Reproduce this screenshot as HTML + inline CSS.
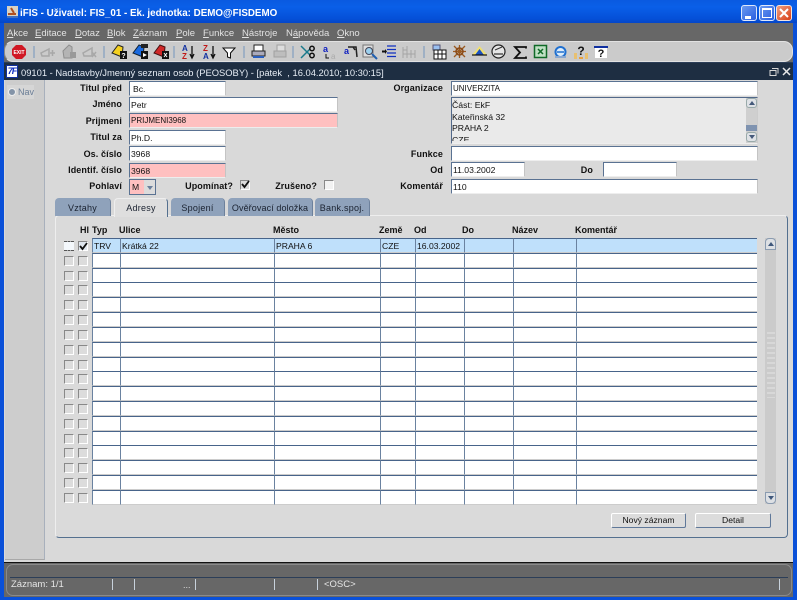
<!DOCTYPE html>
<html><head><meta charset="utf-8"><style>
html,body{margin:0;padding:0;width:797px;height:600px;overflow:hidden;background:#0a50d8}
*{box-sizing:border-box}
body{font-family:"Liberation Sans",sans-serif;font-size:9px;color:#111;position:relative}
.a,.l,.f,.r,.tab,.cb,.hd,.btn,.sep{position:absolute}
.l{font-weight:bold;text-align:right;font-size:9px;color:#111;height:12px;line-height:12px;letter-spacing:.1px}
.f{background:#fff;height:15px;line-height:14px;padding-left:1px;border-top:1px solid #5a7292;border-left:1px solid #5a7292;border-right:1px solid #c4c4c4;border-bottom:1px solid #eee;white-space:nowrap;overflow:hidden;font-size:8.600px}
.p{background:#ffc0c0}
.tab{top:198px;height:18px;background:#8fa2bb;border-radius:4px 4px 0 0;text-align:center;line-height:20px;font-size:9px;letter-spacing:.25px;border-right:1px solid #6d819c;color:#1a2230}
.hd{top:225px;font-weight:bold;font-size:9px;color:#111}
.cb{width:10px;height:10px;background:#ddd;border:1px solid #888;border-right-color:#fff;border-bottom-color:#fff}
.r{left:0;width:797px;height:15px}
.r i{position:absolute;top:0;height:15px;background:#fff;border-top:1px solid #48648a;border-left:1px solid #6a82a0;border-bottom:1px solid #ccc;font-style:normal;line-height:14px;padding-left:1px;font-size:8.600px;white-space:nowrap;overflow:hidden}
.r i:nth-of-type(1){left:92px;width:28px}
.r i:nth-of-type(2){left:120px;width:154px}
.r i:nth-of-type(3){left:274px;width:106px}
.r i:nth-of-type(4){left:380px;width:35px}
.r i:nth-of-type(5){left:415px;width:49px}
.r i:nth-of-type(6){left:464px;width:49px}
.r i:nth-of-type(7){left:513px;width:63px}
.r i:nth-of-type(8){left:576px;width:181px}
.r b{position:absolute;top:3px;width:10px;height:10px;background:#dcdcdc;border:1px solid #888;border-right-color:#fff;border-bottom-color:#fff}
.r b:nth-of-type(1){left:64px}
.r b:nth-of-type(2){left:78px}
.s i{background:#bfe0fb}
.btn{top:513px;height:15px;background:#dcdcdc;border:1px solid #5f7899;border-top-color:#fff;border-left-color:#fff;border-radius:2px;text-align:center;line-height:13px;font-size:8.600px}
.m{position:absolute;top:28px;font-size:9.500px;color:#e2e2e2;line-height:12px;text-decoration:none}
.sep{top:46px;width:2px;height:12px;background:#9fb0c4}
svg{position:absolute;overflow:visible}
.st{position:absolute;top:579px;width:1px;height:11px;background:#c8d2dc}
</style></head><body>
<div class="a" style="left:0;top:0;width:797px;height:23px;background:linear-gradient(#0a5ae0,#0a5fe8 30%,#0550d8 80%,#0446c8)"></div>
<svg style="left:5px;top:5px" width="15" height="15"><rect x="2" y="1" width="11" height="12" fill="#d8d2c4"/><path d="M3 12h9M3 9h8M6 3l3 5" stroke="#b05020" stroke-width="2"/><rect x="2" y="11" width="11" height="2" fill="#4070c0"/></svg>
<div class="a" style="left:20px;top:7px;color:#fff;font-size:9.800px;line-height:14px;font-weight:bold;white-space:nowrap">iFIS - Uživatel: FIS_01 - Ek. jednotka: DEMO@FISDEMO</div>
<div class="a" style="left:741px;top:5px;width:16px;height:16px;background:linear-gradient(135deg,#6a9af0,#2a5ee0);border:1px solid #dfe8fb;border-radius:3px"><div class="a" style="left:3px;top:10px;width:6px;height:3px;background:#fff"></div></div>
<div class="a" style="left:759px;top:5px;width:16px;height:16px;background:linear-gradient(135deg,#6a9af0,#2a5ee0);border:1px solid #dfe8fb;border-radius:3px"><div class="a" style="left:2px;top:2px;width:10px;height:10px;border:1px solid #fff;border-top-width:2px"></div></div>
<div class="a" style="left:776px;top:5px;width:16px;height:16px;background:linear-gradient(135deg,#f0a080,#d83c14);border:1px solid #f4e4de;border-radius:3px"><svg style="left:2px;top:2px" width="10" height="10"><path d="M1 1l8 8M9 1l-8 8" stroke="#fff" stroke-width="2"/></svg></div>

<div class="a" style="left:4px;top:23px;width:789px;height:39px;background:#676767"></div>
<span class="m" style="left:7px"><u>A</u>kce</span>
<span class="m" style="left:35px"><u>E</u>ditace</span>
<span class="m" style="left:75px"><u>D</u>otaz</span>
<span class="m" style="left:107px"><u>B</u>lok</span>
<span class="m" style="left:133px"><u>Z</u>áznam</span>
<span class="m" style="left:176px"><u>P</u>ole</span>
<span class="m" style="left:203px"><u>F</u>unkce</span>
<span class="m" style="left:242px"><u>N</u>ástroje</span>
<span class="m" style="left:286px">N<u>á</u>pověda</span>
<span class="m" style="left:337px"><u>O</u>kno</span>

<div class="a" style="left:4px;top:41px;width:789px;height:21px;background:#cbcbcb;border-radius:9px;border:1px solid #e2e2e2;border-left-color:#8a8a8a"></div>
<!-- toolbar icons -->
<svg style="left:11px;top:44px" width="16" height="16"><path d="M5 1h6l4 4v6l-4 4H5l-4-4V5z" fill="#d01824"/><text x="8" y="10" font-size="5" font-weight="bold" text-anchor="middle" fill="#fff" font-family="Liberation Sans">EXIT</text></svg>
<div class="sep" style="left:33px"></div>
<svg style="left:40px;top:45px" width="16" height="14"><path d="M1 8l8-4v7H2zM10 8h5M12.500 5v6" fill="none" stroke="#a8a8a8" stroke-width="1.500"/></svg>
<svg style="left:61px;top:44px" width="16" height="15"><path d="M2 7l6-6 3 2v11H3z" fill="#b4b4b4" stroke="#8e8e8e"/><rect x="9" y="8" width="6" height="6" fill="#999"/></svg>
<svg style="left:82px;top:45px" width="15" height="14"><path d="M1 8l9-5v8H2zM10 7l4 5M14 7l-4 5" fill="none" stroke="#a8a8a8" stroke-width="1.500"/></svg>
<div class="sep" style="left:103px"></div>
<svg style="left:111px;top:43px" width="17" height="17"><path d="M1 10l6-8 5 2-1 10z" fill="#f4d020" stroke="#222"/><rect x="9" y="8" width="7" height="8" fill="#111"/><text x="12.500" y="15" font-size="7" font-weight="bold" text-anchor="middle" fill="#fff" font-family="Liberation Sans">?</text></svg>
<svg style="left:132px;top:43px" width="17" height="17"><path d="M1 10l6-8 5 2-1 10z" fill="#1a6ae0" stroke="#123"/><rect x="9" y="1" width="7" height="4" fill="#222"/><rect x="9" y="8" width="7" height="8" fill="#111"/><path d="M11 10l4 2-4 2z" fill="#fff"/></svg>
<svg style="left:153px;top:43px" width="17" height="17"><path d="M1 10l6-8 5 2-1 10z" fill="#d02828" stroke="#411"/><rect x="9" y="8" width="7" height="8" fill="#111"/><path d="M11 10l3 4M14 10l-3 4" stroke="#fff"/></svg>
<div class="sep" style="left:173px"></div>
<svg style="left:182px;top:44px" width="14" height="16"><text x="0" y="7" font-size="8" font-weight="bold" fill="#1030a0" font-family="Liberation Sans">A</text><text x="0" y="15" font-size="8" font-weight="bold" fill="#c01818" font-family="Liberation Sans">Z</text><path d="M10 2v11M8 10l2 4 2-4" stroke="#111" fill="none" stroke-width="1.300"/></svg>
<svg style="left:203px;top:44px" width="14" height="16"><text x="0" y="7" font-size="8" font-weight="bold" fill="#c01818" font-family="Liberation Sans">Z</text><text x="0" y="15" font-size="8" font-weight="bold" fill="#1030a0" font-family="Liberation Sans">A</text><path d="M10 2v11M8 10l2 4 2-4" stroke="#111" fill="none" stroke-width="1.300"/></svg>
<svg style="left:222px;top:46px" width="14" height="13"><path d="M1 2h12L8.500 7v5l-3-1V7z" fill="#fff" stroke="#111"/></svg>
<div class="sep" style="left:243px"></div>
<svg style="left:251px;top:44px" width="15" height="15"><rect x="3" y="1" width="9" height="6" fill="#fff" stroke="#222"/><rect x="1" y="7" width="13" height="5" fill="#aab" stroke="#222"/><path d="M2 13h11" stroke="#2a60c0" stroke-width="2"/></svg>
<svg style="left:272px;top:44px" width="16" height="15"><rect x="5" y="1" width="8" height="6" fill="#ddd" stroke="#a0a0a0"/><rect x="2" y="7" width="12" height="6" fill="#bdbdbd" stroke="#a0a0a0"/></svg>
<div class="sep" style="left:292px"></div>
<svg style="left:300px;top:45px" width="16" height="14"><path d="M1 1l9 9M1 13l9-9" stroke="#1a7a8c" stroke-width="1.500"/><circle cx="12" cy="3.500" r="2.200" fill="none" stroke="#111" stroke-width="1.500"/><circle cx="12" cy="10.500" r="2.200" fill="none" stroke="#111" stroke-width="1.500"/></svg>
<svg style="left:322px;top:44px" width="15" height="16"><text x="1" y="8" font-size="9" font-weight="bold" fill="#1020c0" font-family="Liberation Sans">a</text><text x="9" y="15" font-size="8" fill="#aaa" font-family="Liberation Sans">a</text><path d="M4 10v4h3" stroke="#111" fill="none"/></svg>
<svg style="left:343px;top:44px" width="16" height="15"><text x="1" y="10" font-size="9" font-weight="bold" fill="#1020c0" font-family="Liberation Sans">a</text><path d="M5 3h8l1 10M10 3l2 3" stroke="#222" fill="none" stroke-width="1.500"/></svg>
<svg style="left:362px;top:44px" width="16" height="16"><rect x="1" y="1" width="10" height="12" fill="#ddd" stroke="#777"/><circle cx="7" cy="7" r="3.500" fill="#9cd0ee" stroke="#445"/><path d="M10 10l5 5" stroke="#2060b0" stroke-width="2"/></svg>
<svg style="left:382px;top:45px" width="15" height="14"><path d="M5 1h9M5 4.500h9M5 8h9M5 11.500h9" stroke="#1030c0" stroke-width="1.300"/><path d="M0 6.500h3" stroke="#111" stroke-width="2"/><path d="M3 4l2 2.500L3 9z" fill="#111"/></svg>
<svg style="left:402px;top:45px" width="14" height="14"><path d="M1 2v11M5 1v12M9 5v8M13 5v8M1 5h4M1 9h12" stroke="#a4a4a4" fill="none"/></svg>
<div class="sep" style="left:423px"></div>
<svg style="left:432px;top:44px" width="15" height="16"><rect x="1" y="1" width="7" height="5" fill="#9ac0f0" stroke="#557"/><rect x="2" y="6" width="12" height="9" fill="#fff" stroke="#111"/><path d="M2 10h12M6 6v9M10 6v9" stroke="#111"/></svg>
<svg style="left:452px;top:44px" width="15" height="15"><path d="M2 2l11 11M13 2L2 13M7.500 1v13M1 7.500h13" stroke="#9a5a20" stroke-width="1.300"/><circle cx="7.500" cy="7.500" r="3.500" fill="none" stroke="#8a4a18" stroke-width="1.500"/></svg>
<svg style="left:472px;top:46px" width="15" height="10"><path d="M0 9L7.500 0 15 9z" fill="#f0e070"/><path d="M3 9l4.500-6L12 9z" fill="#1a50c0"/><path d="M0 9h15" stroke="#111" stroke-width="1.200"/></svg>
<svg style="left:491px;top:44px" width="15" height="15"><circle cx="7.500" cy="7.500" r="6.500" fill="#e6e6e6" stroke="#222" stroke-width="1.200"/><path d="M4 6l7-3" stroke="#333"/><path d="M3 10h9" stroke="#777" stroke-width="2"/></svg>
<svg style="left:514px;top:46px" width="13" height="13"><path d="M12 2.500V1H1l5 5.500L1 12h11v-1.500" fill="none" stroke="#111" stroke-width="1.800"/></svg>
<svg style="left:534px;top:45px" width="13" height="13"><rect x=".5" y=".5" width="12" height="12" fill="#bfe0c4" stroke="#106a28" stroke-width="1.500"/><path d="M4 4l5 5M9 4l-5 5" stroke="#106a28" stroke-width="1.500"/></svg>
<svg style="left:554px;top:45px" width="13" height="14"><circle cx="6.500" cy="7" r="5" fill="#dcecfa" stroke="#2070d0" stroke-width="2"/><path d="M3 7h7" stroke="#2070d0" stroke-width="1.500"/><rect x="1" y="11" width="11" height="2" fill="#8aa8d0"/></svg>
<svg style="left:573px;top:44px" width="16" height="16"><path d="M1 9h3v6H1zM12 9h3v6h-3z" fill="#e8c070"/><text x="8" y="11" font-size="12" font-weight="bold" text-anchor="middle" fill="#111" font-family="Liberation Sans">?</text><path d="M6 13h4v2H6z" fill="#e8a040"/></svg>
<svg style="left:594px;top:46px" width="14" height="13"><rect x="0" y="0" width="14" height="2" fill="#1030a0"/><rect x="1" y="2" width="12" height="10" fill="#fff"/><text x="7" y="11" font-size="11" font-weight="bold" text-anchor="middle" fill="#111" font-family="Liberation Sans">?</text></svg>

<!-- inner window title -->
<div class="a" style="left:4px;top:62px;width:789px;height:18px;background:#1e2e42;border-top:1px solid #2c3e58"></div>
<div class="a" style="left:6px;top:65px;width:12px;height:13px;background:#fff;border:1px solid #1030a0;color:#1030c0;font:italic bold 9px/11px 'Liberation Sans';text-align:center;overflow:hidden;letter-spacing:-1px">7F</div>
<div class="a" style="left:21px;top:66px;color:#e6ecf4;font-size:9.400px;line-height:13px;white-space:nowrap">09101 - Nadstavby/Jmenný seznam osob (PEOSOBY) - [pátek&nbsp; , 16.04.2010; 10:30:15]</div>
<svg style="left:769px;top:67px" width="22" height="10"><path d="M3 1.500h6v5M1 3.500h6v5H1z" fill="none" stroke="#d8d8d8"/><path d="M14 1l7 7M21 1l-7 7" stroke="#e8e8e8" stroke-width="1.500"/></svg>

<!-- content -->
<div class="a" style="left:4px;top:80px;width:789px;height:482px;background:#d9d9d9"></div>
<div class="a" style="left:5px;top:80px;width:40px;height:480px;background:#cdcdcd;border-right:1px solid #a8b0bc;border-bottom:1px solid #a8a8a8"></div>
<div class="a" style="left:7px;top:85px;width:27px;height:14px;background:#d6d6d6"></div>
<div class="a" style="left:8px;top:88px;width:8px;height:8px;border-radius:50%;background:#8494a8;border:1px solid #eee"></div>
<div class="a" style="left:18px;top:87px;font-size:9px;color:#6a7d96;line-height:11px">Nav</div>

<div class="l" style="left:50px;width:72px;top:82px">Titul před</div>
<div class="f" style="left:129px;top:81px;width:97px;padding-left:3px">Bc.</div>
<div class="l" style="left:50px;width:72px;top:98px">Jméno</div>
<div class="f" style="left:129px;top:97px;width:209px">Petr</div>
<div class="l" style="left:50px;width:72px;top:115px">Prijmeni</div>
<div class="f p" style="left:129px;top:113px;width:209px;font-size:8px">PRIJMENI3968</div>
<div class="l" style="left:50px;width:72px;top:131px">Titul za</div>
<div class="f" style="left:129px;top:130px;width:97px">Ph.D.</div>
<div class="l" style="left:50px;width:72px;top:148px">Os. číslo</div>
<div class="f" style="left:129px;top:146px;width:97px">3968</div>
<div class="l" style="left:50px;width:72px;top:164px">Identif. číslo</div>
<div class="f p" style="left:129px;top:163px;width:97px">3968</div>
<div class="l" style="left:50px;width:72px;top:180px">Pohlaví</div>
<div class="f" style="left:129px;top:179px;width:27px;height:16px;background:#dcdcdc;padding:0;border-color:#5a7292"><div class="a" style="left:0;top:0;width:14px;height:14px;background:#ffc0c0;padding-left:2px;line-height:14px">M</div><div class="a" style="left:17px;top:6px;width:0;height:0;border:3px solid transparent;border-top:4px solid #6a7f9c"></div></div>
<div class="l" style="left:170px;width:63px;top:180px">Upomínat?</div>
<div class="cb" style="left:240px;top:180px;width:10px;height:10px;background:#dcdcdc"></div>
<svg style="left:240px;top:179px" width="11" height="11"><path d="M2 5l2.500 3L9 2" stroke="#111" stroke-width="1.800" fill="none"/></svg>
<div class="l" style="left:270px;width:47px;top:180px">Zrušeno?</div>
<div class="cb" style="left:324px;top:180px;background:#f2f2f2"></div>

<div class="l" style="left:380px;width:63px;top:82px">Organizace</div>
<div class="f" style="left:451px;top:81px;width:307px;font-size:8px">UNIVERZITA</div>
<div class="a" style="left:451px;top:97px;width:307px;height:47px;background:#eaeaea;border:1px solid #52698a;border-right-color:#ccc;border-bottom-color:#eee;overflow:hidden;padding-left:0;line-height:11.500px;padding-top:2px;font-size:8.700px">Část: EkF<br>Kateřinská 32<br>PRAHA 2<br>CZE</div>
<div class="a" style="left:452px;top:141px;width:293px;height:2px;background:#eaeaea"></div>
<div class="a" style="left:746px;top:98px;width:11px;height:45px;background:#cfcfcf"></div>
<div class="a" style="left:746px;top:98px;width:11px;height:10px;background:#dfe2e6;border:1px solid #9aa;border-radius:3px"><div class="a" style="left:2px;top:2px;width:0;height:0;border:3px solid transparent;border-bottom:4px solid #44597a;border-top:0"></div></div>
<div class="a" style="left:746px;top:125px;width:11px;height:6px;background:#7f93b0"></div>
<div class="a" style="left:746px;top:132px;width:11px;height:10px;background:#dfe2e6;border:1px solid #9aa;border-radius:3px"><div class="a" style="left:2px;top:2px;width:0;height:0;border:3px solid transparent;border-top:4px solid #44597a;border-bottom:0"></div></div>
<div class="l" style="left:380px;width:63px;top:148px">Funkce</div>
<div class="f" style="left:451px;top:146px;width:307px"></div>
<div class="l" style="left:380px;width:63px;top:164px">Od</div>
<div class="f" style="left:451px;top:162px;width:74px">11.03.2002</div>
<div class="l" style="left:560px;width:33px;top:164px">Do</div>
<div class="f" style="left:603px;top:162px;width:74px"></div>
<div class="l" style="left:380px;width:63px;top:180px">Komentář</div>
<div class="f" style="left:451px;top:179px;width:307px">110</div>

<!-- tabs -->
<div class="a" style="left:55px;top:215px;width:733px;height:323px;background:#dadada;border:1px solid #eee;border-right-color:#54708f;border-bottom-color:#54708f;border-radius:4px"></div>
<div class="tab" style="left:55px;width:56px">Vztahy</div>
<div class="tab" style="left:114px;width:54px;height:19px;background:#dedede;border:1px solid #eee;border-right-color:#54708f;border-bottom:0;line-height:19px">Adresy</div>
<div class="tab" style="left:171px;width:54px">Spojení</div>
<div class="tab" style="left:228px;width:85px;letter-spacing:.1px">Ověřovací doložka</div>
<div class="tab" style="left:315px;width:55px">Bank.spoj.</div>

<div class="hd" style="left:80px">Hl</div>
<div class="hd" style="left:92px">Typ</div>
<div class="hd" style="left:119px">Ulice</div>
<div class="hd" style="left:273px">Město</div>
<div class="hd" style="left:379px">Země</div>
<div class="hd" style="left:414px">Od</div>
<div class="hd" style="left:462px">Do</div>
<div class="hd" style="left:512px">Název</div>
<div class="hd" style="left:575px">Komentář</div>

<div class="a" style="left:92px;top:238px;width:665px;height:266px;background:#fff"></div>
<div class="r s" style="top:238px"><b style="background:#f4f8fc;border:0;border-top:1px dashed #555;border-bottom:1px dashed #555"></b><b style="background:#dfe6ee"></b><i>TRV</i><i>Krátká 22</i><i>PRAHA 6</i><i>CZE</i><i>16.03.2002</i><i></i><i></i><i></i></div>
<svg style="left:78px;top:241px" width="11" height="11"><path d="M2 5l2.500 3L9 2" stroke="#111" stroke-width="1.800" fill="none"/></svg>
<div class="r" style="top:253px"><b></b><b></b><i></i><i></i><i></i><i></i><i></i><i></i><i></i><i></i></div>
<div class="r" style="top:268px"><b></b><b></b><i></i><i></i><i></i><i></i><i></i><i></i><i></i><i></i></div>
<div class="r" style="top:282px"><b></b><b></b><i></i><i></i><i></i><i></i><i></i><i></i><i></i><i></i></div>
<div class="r" style="top:297px"><b></b><b></b><i></i><i></i><i></i><i></i><i></i><i></i><i></i><i></i></div>
<div class="r" style="top:312px"><b></b><b></b><i></i><i></i><i></i><i></i><i></i><i></i><i></i><i></i></div>
<div class="r" style="top:327px"><b></b><b></b><i></i><i></i><i></i><i></i><i></i><i></i><i></i><i></i></div>
<div class="r" style="top:342px"><b></b><b></b><i></i><i></i><i></i><i></i><i></i><i></i><i></i><i></i></div>
<div class="r" style="top:357px"><b></b><b></b><i></i><i></i><i></i><i></i><i></i><i></i><i></i><i></i></div>
<div class="r" style="top:371px"><b></b><b></b><i></i><i></i><i></i><i></i><i></i><i></i><i></i><i></i></div>
<div class="r" style="top:386px"><b></b><b></b><i></i><i></i><i></i><i></i><i></i><i></i><i></i><i></i></div>
<div class="r" style="top:401px"><b></b><b></b><i></i><i></i><i></i><i></i><i></i><i></i><i></i><i></i></div>
<div class="r" style="top:416px"><b></b><b></b><i></i><i></i><i></i><i></i><i></i><i></i><i></i><i></i></div>
<div class="r" style="top:431px"><b></b><b></b><i></i><i></i><i></i><i></i><i></i><i></i><i></i><i></i></div>
<div class="r" style="top:445px"><b></b><b></b><i></i><i></i><i></i><i></i><i></i><i></i><i></i><i></i></div>
<div class="r" style="top:460px"><b></b><b></b><i></i><i></i><i></i><i></i><i></i><i></i><i></i><i></i></div>
<div class="r" style="top:475px"><b></b><b></b><i></i><i></i><i></i><i></i><i></i><i></i><i></i><i></i></div>
<div class="r" style="top:490px"><b></b><b></b><i></i><i></i><i></i><i></i><i></i><i></i><i></i><i></i></div>

<!-- table scrollbar -->
<div class="a" style="left:765px;top:238px;width:11px;height:266px;background:#cbcbcb"></div>
<div class="a" style="left:765px;top:238px;width:11px;height:12px;background:#dde0e4;border:1px solid #8a9bb0;border-radius:4px 4px 0 0"><div class="a" style="left:2px;top:3px;width:0;height:0;border:3px solid transparent;border-bottom:4px solid #40587c;border-top:0"></div></div>
<div class="a" style="left:765px;top:492px;width:11px;height:12px;background:#dde0e4;border:1px solid #8a9bb0;border-radius:0 0 4px 4px"><div class="a" style="left:2px;top:3px;width:0;height:0;border:3px solid transparent;border-top:4px solid #40587c;border-bottom:0"></div></div>
<div class="a" style="left:767px;top:332px;width:8px;height:66px;background:repeating-linear-gradient(#d8d8d8 0 2px,#cbcbcb 2px 5px)"></div>

<div class="btn" style="left:611px;width:75px">Nový záznam</div>
<div class="btn" style="left:695px;width:76px">Detail</div>

<!-- status bar -->
<div class="a" style="left:4px;top:562px;width:789px;height:35px;background:#676767;border-top:1px solid #111"></div>
<div class="a" style="left:6px;top:564px;width:786px;height:32px;border:1px solid #8a8a8a;border-radius:7px"></div>
<div class="a" style="left:10px;top:577px;width:778px;height:1px;background:#2c3e58"></div>
<div class="a" style="left:11px;top:578px;color:#e6e6e6;font-size:9.500px;line-height:13px">Záznam: 1/1</div>
<div class="st" style="left:112px"></div>
<div class="st" style="left:134px"></div>
<div class="st" style="left:195px"></div>
<div class="st" style="left:274px"></div>
<div class="st" style="left:317px"></div>
<div class="st" style="left:779px"></div>
<div class="a" style="left:183px;top:580px;color:#ddd;font-size:9px;line-height:11px">...</div>
<div class="a" style="left:324px;top:578px;color:#e6e6e6;font-size:9.500px;line-height:13px">&lt;OSC&gt;</div>
</body></html>
